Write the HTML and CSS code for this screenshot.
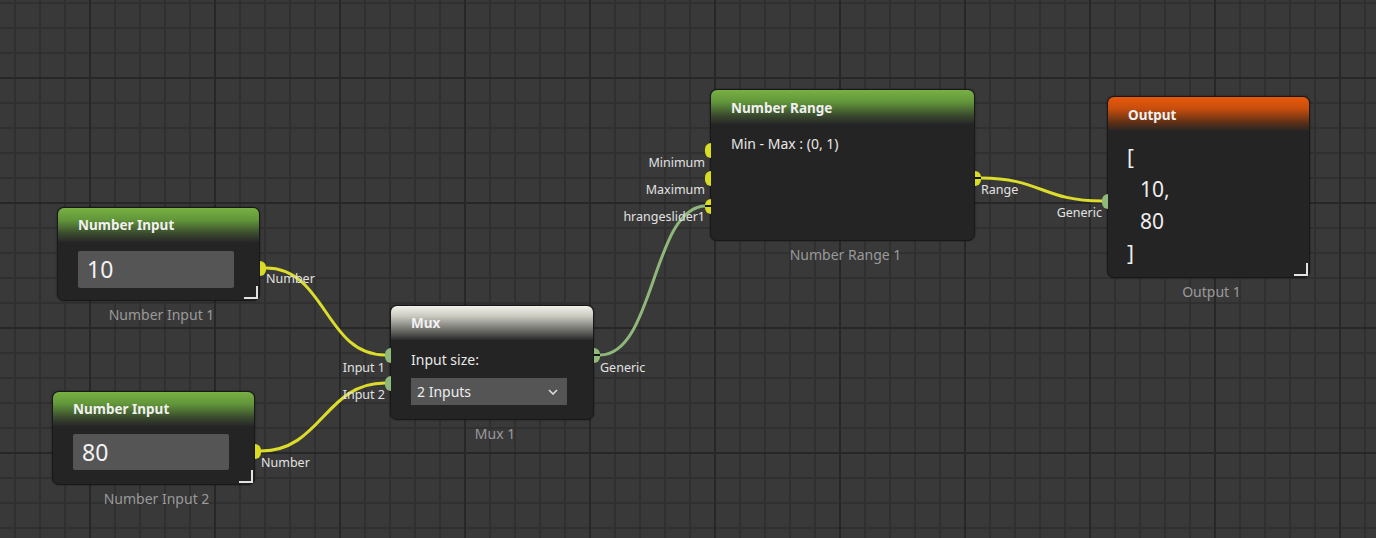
FILE: index.html
```html
<!DOCTYPE html>
<html>
<head>
<meta charset="utf-8">
<link rel="stylesheet" href="styles.css">
</head>
<body>
<div class="canvas">
  <svg class="wires" width="1376" height="538" viewBox="0 0 1376 538">
    <path class="w-yellow" d="M266 268 C 326 268, 325 355, 385 355"/>
    <path class="w-yellow" d="M261 451 C 321 451, 325 383, 385 383"/>
    <path class="w-green" d="M600 355 C 655 355, 652 206, 706 206"/>
    <path class="w-yellow" d="M981 178 C 1040 178, 1043 201, 1102 201"/>
  </svg>

  <div class="wrap ni1">
    <div class="node">
      <div class="head green">Number Input</div>
      <div class="body pad-num"><div class="numbox">10</div></div>
      <span class="resize"></span>
      <span class="port out yellow p-ni"></span>
      <span class="plabel out l-ni">Number</span>
    </div>
    <div class="caption">Number Input 1</div>
  </div>

  <div class="wrap ni2">
    <div class="node">
      <div class="head green">Number Input</div>
      <div class="body pad-num"><div class="numbox">80</div></div>
      <span class="resize"></span>
      <span class="port out yellow p-ni2"></span>
      <span class="plabel out l-ni2">Number</span>
    </div>
    <div class="caption">Number Input 2</div>
  </div>

  <div class="wrap mux">
    <div class="node">
      <div class="head grey">Mux</div>
      <div class="body pad-mux">
        <div class="field-label">Input size:</div>
        <div class="select"><span>2 Inputs</span>
          <svg class="chev" width="10" height="6" viewBox="0 0 10 6"><path d="M1 1 L5 5 L9 1" fill="none" stroke="#ddd" stroke-width="1.6"/></svg>
        </div>
      </div>
      <span class="port in green-p p-m1"></span>
      <span class="plabel in l-m1">Input 1</span>
      <span class="port in green-p p-m2"></span>
      <span class="plabel in l-m2">Input 2</span>
      <span class="port out green-p linked p-mo"></span>
      <span class="plabel out l-mo">Generic</span>
    </div>
    <div class="caption">Mux 1</div>
  </div>

  <div class="wrap nr">
    <div class="node">
      <div class="head green">Number Range</div>
      <div class="body pad-nr">Min - Max : (0, 1)</div>
      <span class="port in yellow p-r1"></span>
      <span class="plabel in l-r1">Minimum</span>
      <span class="port in yellow p-r2"></span>
      <span class="plabel in l-r2">Maximum</span>
      <span class="port in yellow linked p-r3"></span>
      <span class="plabel in l-r3">hrangeslider1</span>
      <span class="port out yellow linked p-ro"></span>
      <span class="plabel out l-ro">Range</span>
    </div>
    <div class="caption">Number Range 1</div>
  </div>

  <div class="wrap out-node">
    <div class="node">
      <div class="head orange">Output</div>
      <div class="body pad-out">
        <div class="json">[</div>
        <div class="json ind">10,</div>
        <div class="json ind">80</div>
        <div class="json">]</div>
      </div>
      <span class="resize"></span>
      <span class="port in green-p p-oi"></span>
      <span class="plabel in l-oi">Generic</span>
    </div>
    <div class="caption">Output 1</div>
  </div>
</div>
</body>
</html>
```

FILE: styles.css
```css
html, body {
  margin: 0;
  padding: 0;
  width: 1376px;
  height: 538px;
  overflow: hidden;
  font-family: "Noto Sans", "Open Sans", sans-serif;
}

.canvas {
  position: relative;
  width: 1376px;
  height: 538px;
  background-color: #393939;
  background-image:
    linear-gradient(90deg, #272727 0, #272727 2px, transparent 2px),
    linear-gradient(0deg, #272727 0, #272727 2px, transparent 2px),
    linear-gradient(90deg, #303030 0, #303030 2px, transparent 2px),
    linear-gradient(0deg, #303030 0, #303030 2px, transparent 2px);
  background-size: 125px 125px, 125px 125px, 25px 25px, 25px 25px;
  background-position: 89px 0, 0 79px, 14px 0, 0 4px;
}

.wires {
  position: absolute;
  left: 0;
  top: 0;
  z-index: 1;
  pointer-events: none;
}
.wires path {
  fill: none;
  stroke-width: 3;
}
.w-yellow { stroke: #dcdc2c; }
.w-green { stroke: #8fb77c; }

.wrap {
  position: absolute;
  display: flex;
  flex-direction: column;
  align-items: stretch;
  z-index: 2;
}
.ni1 { left: 57px; top: 207px; }
.ni2 { left: 52px; top: 391px; }
.mux { left: 390px; top: 305px; }
.nr { left: 710px; top: 89px; }
.out-node { left: 1107px; top: 96px; }

.node {
  position: relative;
  box-sizing: border-box;
  background: #242424;
  border: 1px solid #181818;
  border-radius: 7px;
  box-shadow: 0 0 2px rgba(0,0,0,0.5);
  color: #e6e6e6;
}
.ni1 .node, .ni2 .node { width: 203px; height: 94px; }
.mux .node { width: 204px; height: 115px; }
.nr .node { width: 265px; height: 152px; }
.out-node .node { width: 203px; height: 182px; }

.head {
  height: 34px;
  box-sizing: border-box;
  padding: 8px 0 0 20px;
  font-size: 13.5px;
  font-weight: 700;
  line-height: 18px;
  color: #f0f0f0;
  border-radius: 6px 6px 0 0;
}
.head.green { background: linear-gradient(180deg, #78b143 0%, #62963a 35%, #3a4a2e 75%, #272727 100%); }
.head.grey { background: linear-gradient(180deg, #f2f2ea 0%, #c9c9c0 30%, #7b7b76 65%, #2a2a2a 100%); }
.head.orange { background: linear-gradient(180deg, #e9590a 0%, #c54d0d 35%, #5f3016 75%, #272525 100%); }
.nr .head, .out-node .head { padding-top: 9px; }
.mux .head { padding-top: 8px; }

.body { box-sizing: border-box; }
.pad-num { padding: 9px 0 0 20px; }
.ni2 .pad-num { padding-top: 8px; }
.numbox {
  width: 156px;
  height: 37px;
  box-sizing: border-box;
  background: #555555;
  border-radius: 2px;
  padding-left: 9px;
  font-size: 23px;
  line-height: 37px;
  color: #f2f2f2;
}
.ni2 .numbox { height: 36px; line-height: 36px; }

.pad-mux { padding: 11px 0 0 20px; }
.field-label { font-size: 14px; line-height: 18px; color: #e8e8e8; }
.select {
  margin-top: 9px;
  width: 156px;
  height: 27px;
  box-sizing: border-box;
  background: #555555;
  padding: 0 9px 0 6px;
  display: flex;
  align-items: center;
  justify-content: space-between;
  font-size: 14px;
  color: #ececec;
}

.pad-nr { padding: 11px 0 0 20px; font-size: 14px; line-height: 18px; color: #e8e8e8; }

.pad-out { padding: 10px 0 0 19px; }
.json { font-size: 21px; line-height: 32px; color: #eeeeee; }
.json.ind { padding-left: 13px; }

.resize {
  position: absolute;
  right: 1px;
  bottom: 1px;
  width: 12px;
  height: 11px;
  border-right: 2px solid #e2e2e2;
  border-bottom: 2px solid #e2e2e2;
}

.caption {
  margin-top: 5px;
  padding-left: 6px;
  text-align: center;
  font-size: 14px;
  line-height: 18px;
  color: #9a9a9a;
}

.port {
  position: absolute;
  width: 6px;
  height: 15px;
  z-index: 3;
}
.port.in { left: -6px; border-radius: 7px 0 0 7px; }
.port.out { right: -7px; border-radius: 0 7px 7px 0; }
.port.yellow { background: #d8dc22; }
.port.green-p { background: #8fba7a; }
.port.linked::after {
  content: "";
  position: absolute;
  left: 0;
  right: 0;
  top: 6px;
  height: 2px;
  background: #151515;
}

.plabel {
  position: absolute;
  font-size: 12.5px;
  line-height: 16px;
  color: #e2e2e2;
  white-space: nowrap;
  z-index: 3;
}
.plabel.in { right: calc(100% + 6px); }
.plabel.out { left: calc(100% + 7px); }

.p-ni { top: 53px; }
.l-ni { top: 63px; }
.p-ni2 { top: 52px; }
.l-ni2 { top: 63px; }

.p-m1 { top: 42px; }
.l-m1 { top: 54px; right: calc(100% + 5px); }
.p-m2 { top: 70px; }
.l-m2 { top: 81px; right: calc(100% + 5px); }
.p-mo { top: 42px; }
.l-mo { top: 54px; }

.p-r1 { top: 53px; }
.l-r1 { top: 65px; right: calc(100% + 8px); }
.p-r2 { top: 81px; }
.l-r2 { top: 92px; right: calc(100% + 8px); }
.p-r3 { top: 109px; }
.l-r3 { top: 119px; right: calc(100% + 8px); }
.p-ro { top: 81px; }
.l-ro { top: 92px; }

.p-oi { top: 97px; }
.l-oi { top: 108px; }
```
